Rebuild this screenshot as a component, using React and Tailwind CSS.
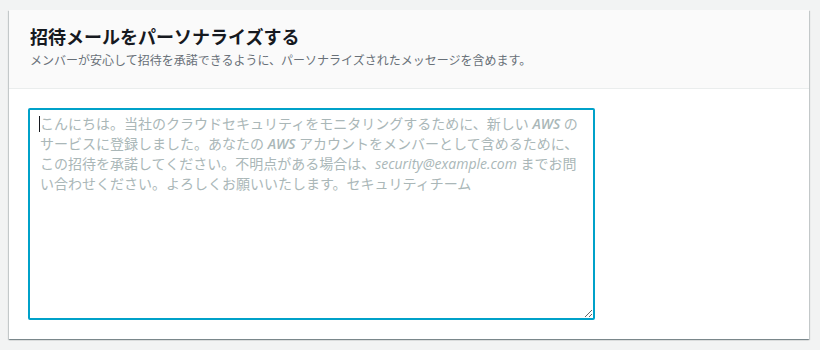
import React from "react";

export default function App() {
  return (
    <div
      className="min-h-screen bg-[#f2f3f3] pt-[10px] pl-[9px]"
      style={{ fontFamily: '"Open Sans", "Noto Sans CJK JP", sans-serif' }}
    >
      <div className="w-[800px] bg-white shadow-[0_1px_1px_0_rgba(0,28,36,0.3),1px_1px_1px_0_rgba(0,28,36,0.15),-1px_1px_1px_0_rgba(0,28,36,0.15)]">
        {/* Header */}
        <div className="bg-[#fafafa] border-b border-[#eaeded] pl-[21px] pr-5 pt-[16px] pb-[19px]">
          <h2 className="text-[18px] leading-[22px] font-bold text-[#16191f]">
            招待メールをパーソナライズする
          </h2>
          <p className="mt-[5px] text-[12px] leading-[16px] text-[#687078]">
            メンバーが安心して招待を承諾できるように、パーソナライズされたメッセージを含めます。
          </p>
        </div>

        {/* Body */}
        <div className="px-[19px] pt-[19px] pb-[19px]">
          <div className="relative w-[567px] h-[212px]">
            <textarea
              className="block w-full h-full border-2 border-[#00a1c9] rounded-[2px] bg-white outline-none"
              aria-label="招待メッセージ"
            />
            {/* placeholder */}
            <div className="pointer-events-none absolute left-[12px] top-[6px] right-[12px] text-[14px] leading-[20px] text-[#aab7b8]">
              <span className="absolute -left-[1px] top-[2px] w-px h-[16px] bg-[#16191f]" />
              こんにちは。当社のクラウドセキュリティをモニタリングするために、新しい <i className="font-semibold">AWS</i> のサービスに登録しました。あなたの <i className="font-semibold">AWS</i> アカウントをメンバーとして含めるために、この招待を承諾してください。不明点がある場合は、<i>security@example.com</i> までお問い合わせください。よろしくお願いいたします。セキュリティチーム
            </div>
          </div>
        </div>
      </div>
    </div>
  );
}
